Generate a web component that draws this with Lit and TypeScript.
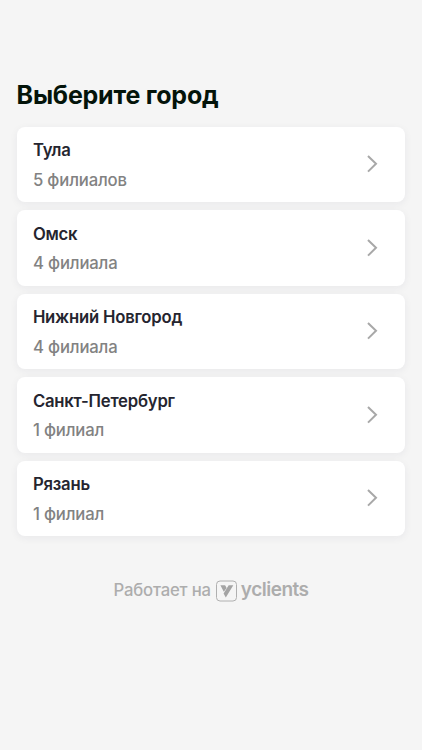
import { LitElement, html, css } from "lit";
import { customElement } from "lit/decorators.js";

const cities = [
  ["Тула", "5 филиалов"],
  ["Омск", "4 филиала"],
  ["Нижний Новгород", "4 филиала"],
  ["Санкт-Петербург", "1 филиал"],
  ["Рязань", "1 филиал"],
];

@customElement("app-root")
export class AppRoot extends LitElement {
  static styles = css`
    :host { display: block; box-sizing: border-box; min-height: 750px; padding: 79px 16.6px 0 16.6px; background: #f5f5f5; font-family: Inter, sans-serif; }
    .title { margin: 0; font-size: 25px; line-height: 32px; font-weight: 700; letter-spacing: -0.22px; color: #04140a; white-space: nowrap; }
    .list { display: flex; flex-direction: column; gap: 8px; margin-top: 15.5px; }
    .card { display: flex; align-items: center; justify-content: space-between; box-sizing: border-box; height: 75.5px; padding: 0 25.9px 0 16.3px; background: #fff; border-radius: 8px; box-shadow: 0 2px 8px rgba(30, 30, 60, 0.06); }
    .name { padding-top: 1.7px; font-size: 16.7px; line-height: 24px; font-weight: 600; letter-spacing: -0.22px; color: #25252f; }
    .count { margin-top: 5.6px; font-size: 16.7px; line-height: 24px; font-weight: 500; letter-spacing: -0.15px; color: #828282; }
    .chevron { display: block; }
    .footer { display: flex; align-items: center; justify-content: center; margin-top: 41.5px; height: 24px; font-size: 16.7px; font-weight: 500; letter-spacing: -0.18px; color: #adadad; }
    .mark { margin: 2px 4px 0 4px; }
    .brand { font-size: 19px; font-weight: 560; letter-spacing: -0.5px; margin-top: -1px; }
  `;

  render() {
    return html`
      <h1 class="title">Выберите город</h1>
      <div class="list">
        ${cities.map(([name, count]) => html`
          <div class="card">
            <div><div class="name">${name}</div><div class="count">${count}</div></div>
            <svg class="chevron" width="16" height="20" viewBox="0 0 16 20" fill="none" stroke="#a8a8a8" stroke-width="2"><path d="M4 2l8 7.8-8 7.8" /></svg>
          </div>`)}
      </div>
      <div class="footer">
        <span>Работает на</span>
        <svg class="mark" width="22" height="22" viewBox="0 0 22 22"><rect x="1.5" y="1" width="20" height="20" rx="3.5" fill="none" stroke="#b0b0b0" stroke-width="1" /><path d="M5.4 5.3h4.7l1.5 2.7-2.8 3.7zM13.7 5.3h4.6l-7.5 12.2-2.2-4z" fill="#a4a4a4" /></svg>
        <span class="brand">yclients</span>
      </div>`;
  }
}
